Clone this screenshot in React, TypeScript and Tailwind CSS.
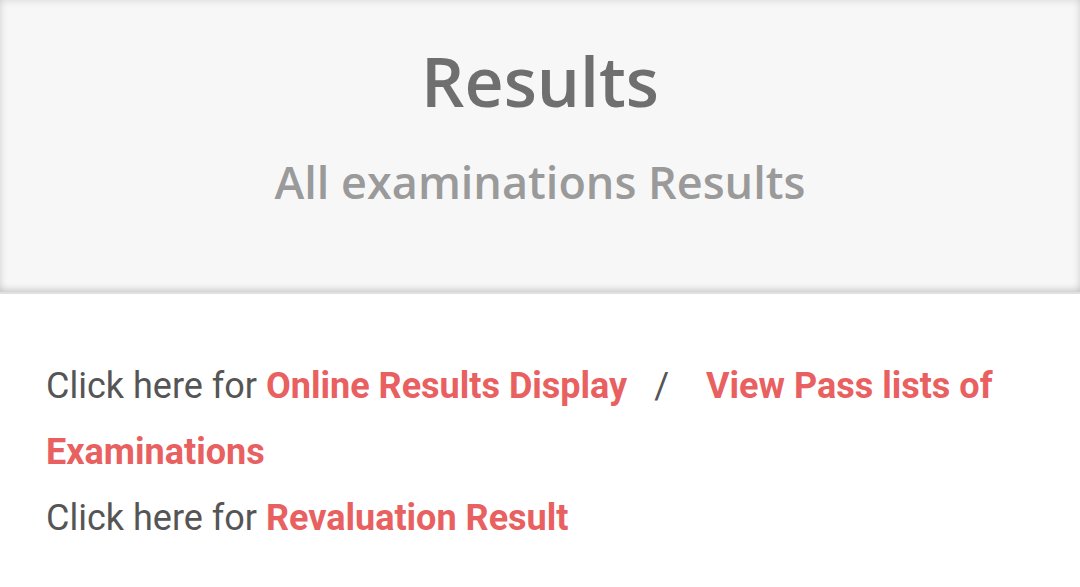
export default function App() {
  return (
    <div className="min-h-[587px] bg-white">
      <header className="h-[294px] border-b-2 border-[#e0e0e0] bg-[#f7f7f7] pt-[34px] text-center shadow-[inset_0_-6px_8px_-4px_rgba(0,0,0,0.12),inset_0_0_8px_rgba(0,0,0,0.14)]">
        <h1 className="font-['Open_Sans',sans-serif] text-[68px] font-semibold leading-[93px] text-[#6f6f6f]">
          Results
        </h1>
        <p className="mt-[24px] font-['Open_Sans',sans-serif] text-[45px] font-semibold leading-[61px] text-[#9a9a9a]">
          All examinations Results
        </p>
      </header>

      <div className="px-[46px] pt-[59px] font-['Roboto',sans-serif] text-[36px] leading-[66px] text-[#555555]">
        <p>
          Click here for{" "}
          <a href="#" className="font-bold text-[#e8605f]">
            Online Results Display
          </a>
          <span className="ml-[27px] mr-[37px]">/</span>
          <a href="#" className="font-bold text-[#e8605f]">
            View Pass lists of Examinations
          </a>
        </p>
        <p>
          Click here for{" "}
          <a href="#" className="font-bold text-[#e8605f]">
            Revaluation Result
          </a>
        </p>
      </div>
    </div>
  );
}
